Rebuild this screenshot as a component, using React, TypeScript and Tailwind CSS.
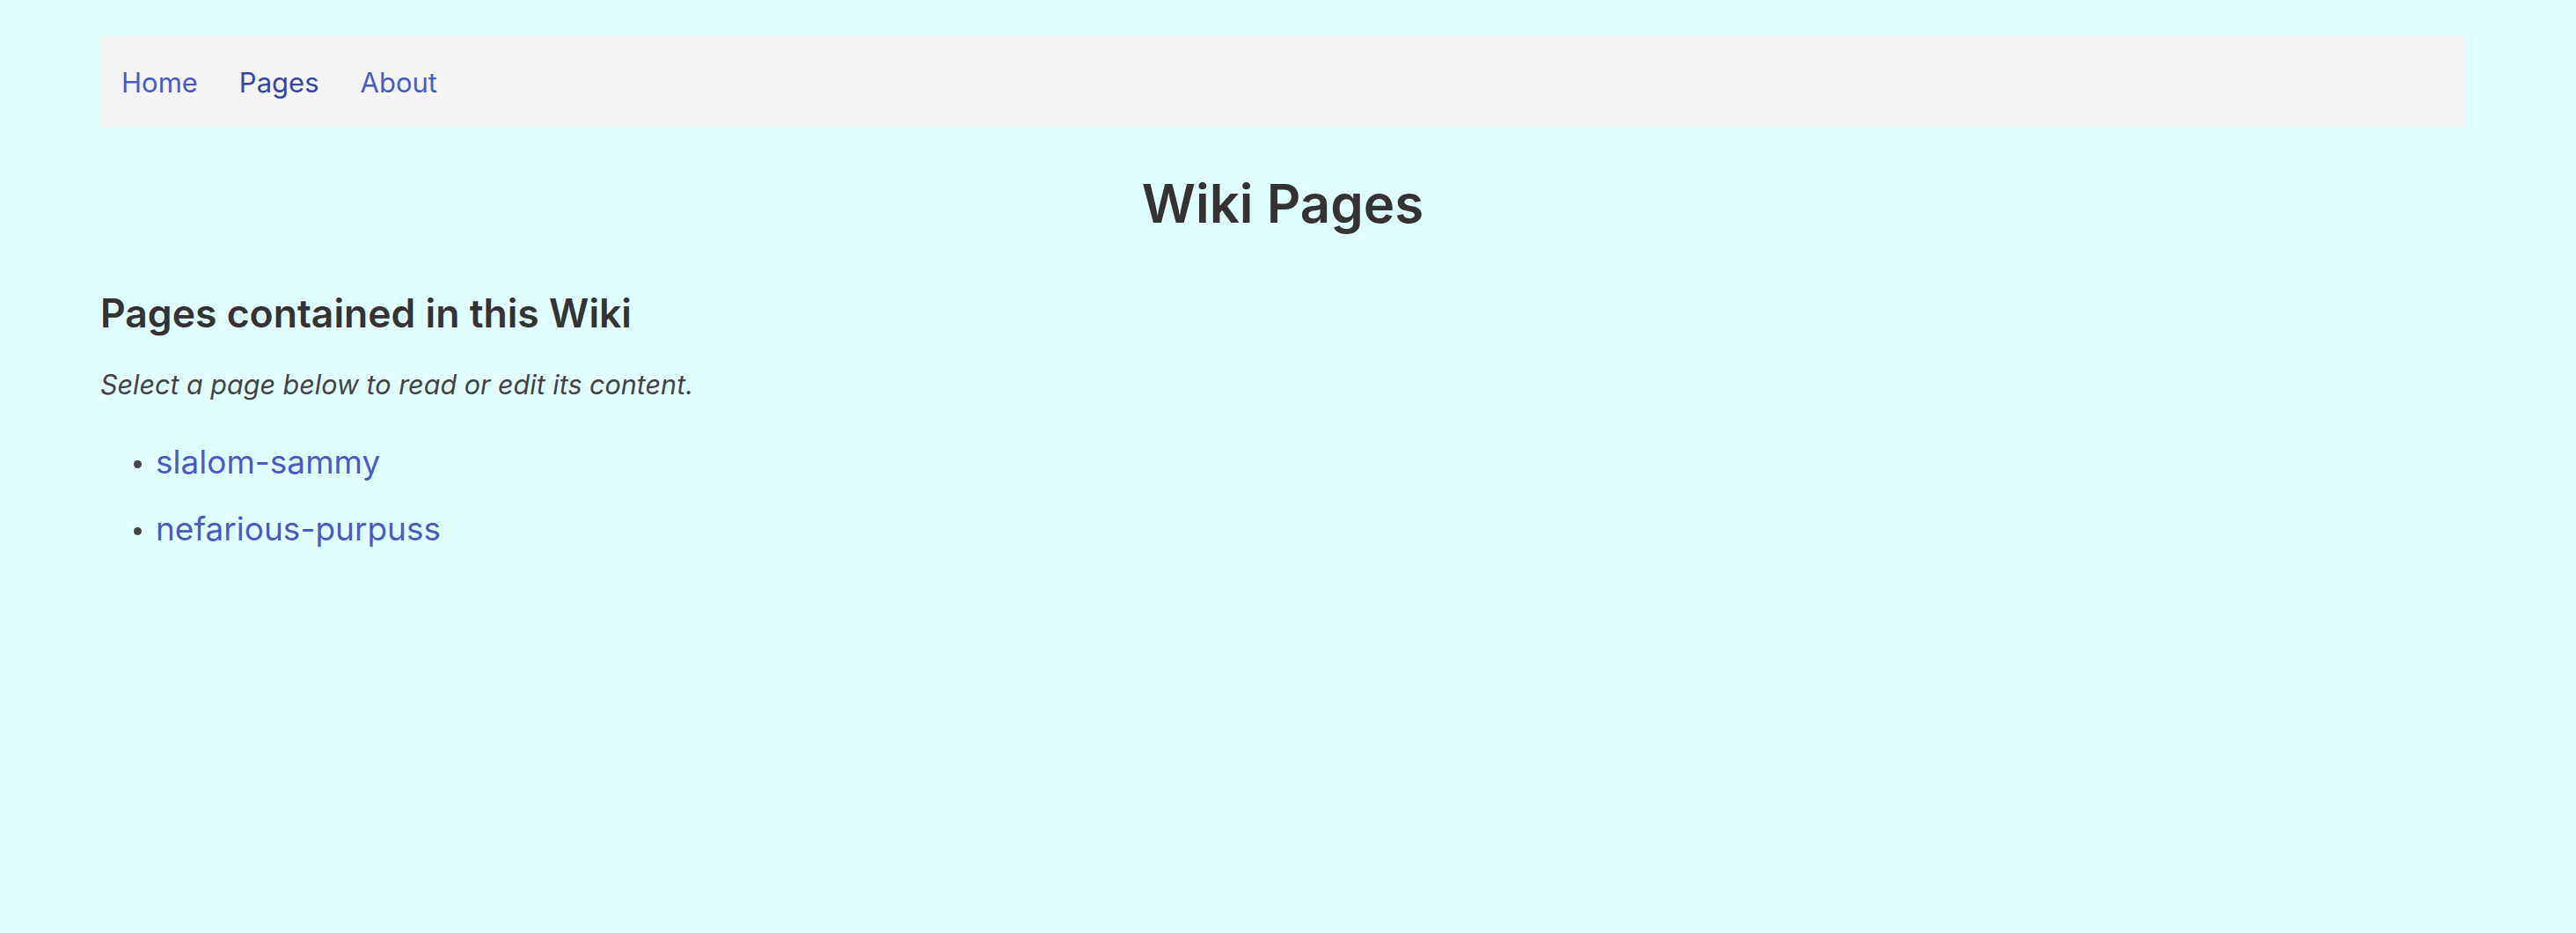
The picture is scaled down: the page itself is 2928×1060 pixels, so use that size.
export default function App() {
  const pages = ["slalom-sammy", "nefarious-purpuss"];
  return (
    <div
      className="min-h-[1060px] w-full bg-[#e0ffff] text-[#333333]"
      style={{ fontFamily: "Inter, 'Noto Sans', sans-serif" }}
    >
      <div className="ml-[114px] w-[2688px] pt-[40px]">
        <nav className="flex h-[104px] items-center gap-[47px] bg-[#f4f4f4] px-[24px] pt-[3px] text-[31px] leading-none">
          <a className="text-[#4a5bc4]" href="#">Home</a>
          <a className="text-[#3546a6]" href="#">Pages</a>
          <a className="text-[#4a5bc4]" href="#">About</a>
        </nav>
        <h1 className="mt-[57px] text-center text-[60px] font-semibold leading-none text-[#333333]">
          Wiki Pages
        </h1>
        <h2 className="mt-[73px] text-[44.5px] font-semibold leading-none text-[#333333]">
          Pages contained in this Wiki
        </h2>
        <p className="mt-[43px] text-[30.5px] italic leading-none text-[#444444]">
          Select a page below to read or edit its content.
        </p>
        <ul className="mt-[54px] flex flex-col gap-[39px] pl-[38px]">
          {pages.map((p) => (
            <li key={p} className="flex items-start gap-[16px]">
              <span className="mt-[17px] h-[9px] w-[9px] shrink-0 rounded-full bg-[#444444]" />
              <a href="#" className="text-[37px] leading-none text-[#4a5bc4]">
                {p}
              </a>
            </li>
          ))}
        </ul>
      </div>
    </div>
  );
}
